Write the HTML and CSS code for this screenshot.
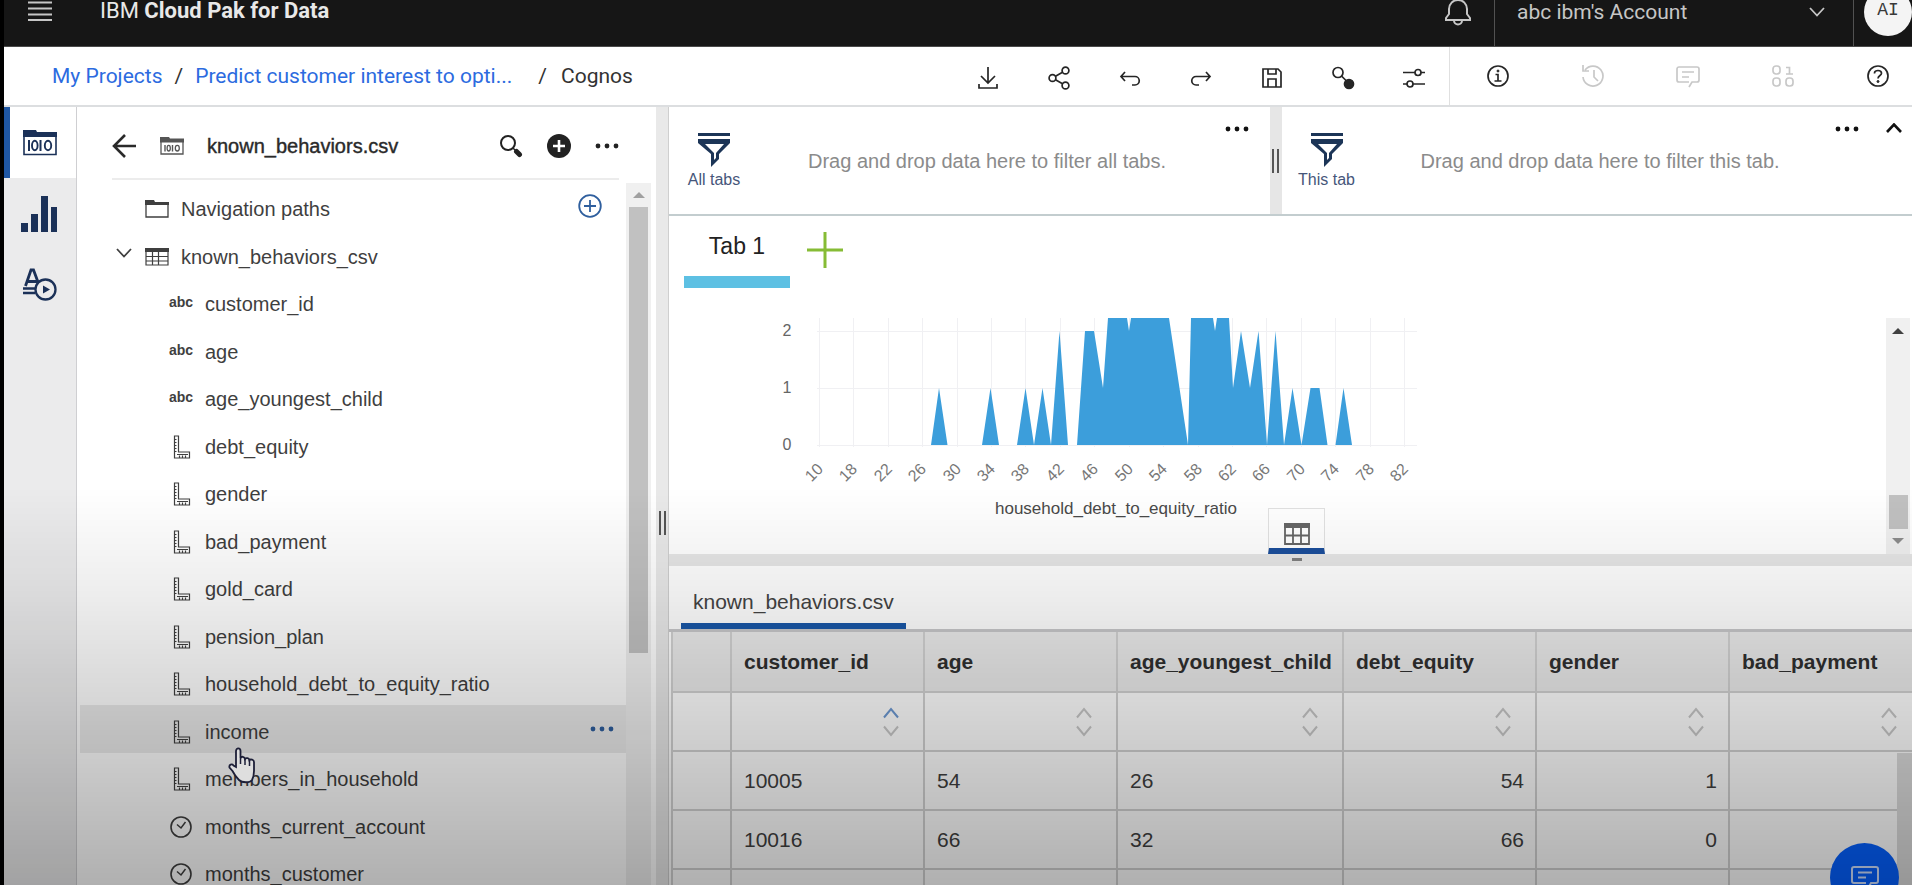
FILE: index.html
```html
<!DOCTYPE html>
<html lang="en">
<head>
<meta charset="utf-8">
<title>IBM Cloud Pak for Data - Cognos</title>
<link rel="stylesheet" href="styles.css">
</head>
<body>
<svg class="defs" aria-hidden="true">
  <symbol id="dots" viewBox="0 0 24 6"><circle cx="3" cy="3" r="2.400"/><circle cx="12" cy="3" r="2.400"/><circle cx="21" cy="3" r="2.400"/></symbol>
  <symbol id="ruler" viewBox="0 0 20 26"><path d="M3.500 2h4v16h11v6h-15zM4 5.500h1.500M4 8.500h1.500M4 11.500h1.500M4 14.500h1.500M4 17.500h1.500M8.500 24v-2.500M11.500 24v-2.500M14.500 24v-2.500M6 20.500h11" fill="none" stroke="currentColor" stroke-width="1.200"/></symbol>
  <symbol id="clock" viewBox="0 0 24 24"><circle cx="12" cy="12" r="10" fill="none" stroke="currentColor" stroke-width="1.600"/><path d="M8 9.500l4 3.500 4.500-6" fill="none" stroke="currentColor" stroke-width="1.500"/></symbol>
  <symbol id="funnel" viewBox="0 0 34 34"><path d="M1 0h32v3H1z"/><path fill-rule="evenodd" d="M1 6h32v4L22 21v5l-8 8V21L1 10zM8 11l9 9v7l2-2v-5l8-9z"/></symbol>
  <symbol id="sort" viewBox="0 0 18 30"><path class="sort-up" d="M2 10.500L9 2l7 8.500"/><path class="sort-down" d="M2 19.500L9 28 16 19.500"/></symbol>
  <symbol id="chat" viewBox="0 0 32 32"><path d="M18 28l4-7h5a2 2 0 0 0 2-2V7a2 2 0 0 0-2-2H5a2 2 0 0 0-2 2v12a2 2 0 0 0 2 2h12M9 10.500h14M9 15.500h8" fill="none" stroke="currentColor" stroke-width="2"/></symbol>
</svg>

<header class="topbar">
  <button class="plain menu-btn" aria-label="Menu"><svg width="24" height="20" viewBox="0 0 24 20"><path d="M0 1.500h24M0 7.500h24M0 13.500h24M0 19h24" stroke="currentColor" stroke-width="2"/></svg></button>
  <span class="brand">IBM <b>Cloud Pak for Data</b></span>
  <div class="top-right">
    <button class="plain bell" aria-label="Notifications"><svg width="28" height="28" viewBox="0 0 28 28" fill="none" stroke="currentColor" stroke-width="2"><path d="M2 22v-2l3-4v-5a9 9 0 0 1 18 0v5l3 4v2zM10 22.500a4 4 0 0 0 8 0"/></svg></button>
    <button class="plain account"><span>abc ibm's Account</span><svg width="16" height="10" viewBox="0 0 16 10"><path d="M1 1l7 7.500L15 1" fill="none" stroke="currentColor" stroke-width="1.800"/></svg></button>
    <button class="plain avatar-cell" aria-label="Profile"><span class="avatar">AI</span></button>
  </div>
</header>

<div class="crumbbar">
  <nav class="crumbs"><a href="#">My Projects</a><span class="sep">/</span><a href="#" class="crumb-long">Predict customer interest to opti...</a><span class="sep">/</span><span>Cognos</span></nav>
  <div class="tools">
    <button class="plain" aria-label="Download"><svg viewBox="0 0 24 24"><path d="M12 1v16M5 10l7 7 7-7M3 18v4h18v-4"/></svg></button>
    <button class="plain" aria-label="Share"><svg viewBox="0 0 24 24"><circle cx="5.500" cy="12" r="3.400"/><circle cx="18.500" cy="4.500" r="3.400"/><circle cx="18.500" cy="19.500" r="3.400"/><path d="M8.500 10.300l7-4M8.500 13.700l7 4"/></svg></button>
    <button class="plain" aria-label="Undo"><svg viewBox="0 0 24 24"><path d="M7 6L3 10.500 7 15M3 10.500h14a4 4 0 0 1 0 8.500h-3"/></svg></button>
    <button class="plain" aria-label="Redo"><svg viewBox="0 0 24 24"><path d="M17 6l4 4.500-4 4.500M21 10.500H7a4 4 0 0 0 0 8.500h3"/></svg></button>
    <button class="plain" aria-label="Save"><svg viewBox="0 0 24 24"><path d="M3 3h15l3 3v15H3zM8 3v5h8V3M8 21v-8h8v8"/></svg></button>
    <button class="plain" aria-label="Links"><svg viewBox="0 0 24 24"><circle cx="7" cy="6.500" r="5"/><path d="M10.500 10l5 5"/><circle cx="18" cy="18" r="4.500" fill="currentColor"/></svg></button>
    <button class="plain" aria-label="Settings"><svg viewBox="0 0 24 24"><circle cx="16" cy="6.500" r="3"/><circle cx="8" cy="18" r="3"/><path d="M1 6.500h12M19 6.500h4M1 18h4M11 18h12"/></svg></button>
  </div>
  <div class="tools-info">
    <button class="plain" aria-label="Information"><svg viewBox="0 0 24 24"><circle cx="12" cy="12" r="10"/><path d="M9.500 10.500H12V17M8.500 17h7"/><circle cx="12" cy="7" r="1" fill="currentColor" stroke-width="1"/></svg></button>
    <button class="plain" disabled aria-label="History"><svg viewBox="0 0 24 24"><path d="M4 6a10 10 0 1 1-2 7M2 1v6h6M13 6v7l4 4"/></svg></button>
    <button class="plain" disabled aria-label="Comments"><svg viewBox="0 0 24 24"><path d="M13 23l3-5h5a2 2 0 0 0 2-2V5a2 2 0 0 0-2-2H3a2 2 0 0 0-2 2v11a2 2 0 0 0 2 2h10M6 8h12M6 13h7"/></svg></button>
    <button class="plain" disabled aria-label="Data"><svg viewBox="0 0 24 24"><rect x="2" y="2" width="7" height="8" rx="3"/><rect x="2" y="14" width="7" height="8" rx="3"/><rect x="15" y="14" width="7" height="8" rx="3"/><path d="M15 3.500h3.500V10M15 10h7"/></svg></button>
    <button class="plain" aria-label="Help"><svg viewBox="0 0 24 24"><circle cx="12" cy="12" r="10"/><path d="M8.500 9.500V9c0-1.500 1.500-2.500 3.500-2.500s3.500 1 3.500 2.800c0 2.200-3.500 2.200-3.500 5.200"/><circle cx="12" cy="17.500" r="1" fill="currentColor" stroke-width="1"/></svg></button>
  </div>
</div>

<main class="workspace">
  <nav class="rail">
    <button class="plain rail-item active" aria-label="Sources"><svg width="34" height="26" viewBox="0 0 34 26"><path d="M0 0h13l1 2h20v5H0z" fill="currentColor"/><path d="M1 6v18.500h32V6" fill="none" stroke="currentColor" stroke-width="1.600"/><path d="M6 10v11M17.500 10v11" stroke="currentColor" stroke-width="2"/><g fill="none" stroke="currentColor" stroke-width="1.900"><ellipse cx="11.800" cy="15.500" rx="2.800" ry="4.700"/><ellipse cx="25" cy="15.500" rx="3.200" ry="4.700"/></g></svg></button>
    <button class="plain rail-item" aria-label="Visualizations"><svg width="37" height="38" viewBox="0 0 37 38" fill="currentColor"><rect x="0" y="28" width="7" height="9"/><rect x="10" y="19" width="7" height="18"/><rect x="20" y="1" width="7" height="36"/><rect x="30" y="12" width="6" height="25"/></svg></button>
    <button class="plain rail-item" aria-label="Widgets"><svg width="34" height="34" viewBox="0 0 34 34" fill="none" stroke="currentColor"><path d="M2.500 18L8 2h2.500L15 14M5 13.500h9" stroke-width="2.800"/><path d="M0 20.500h13M0 25h12" stroke-width="2.600"/><circle cx="22.500" cy="21.500" r="10" fill="#ebebec" stroke-width="2.300"/><path d="M20 17.500l7 4-7 4z" fill="currentColor" stroke="none"/></svg></button>
  </nav>

  <aside class="sources">
    <div class="sources-head">
      <button class="plain" aria-label="Back"><svg width="24" height="24" viewBox="0 0 24 24"><path d="M13 1L2 12l11 11M2 12h22" fill="none" stroke="currentColor" stroke-width="2.600"/></svg></button>
      <svg class="head-folder" width="24" height="18" viewBox="0 0 24 18"><path d="M0 0h9l1 1.500h14v4H0z" fill="currentColor"/><path d="M1 4v13h22V4" fill="none" stroke="currentColor" stroke-width="1.300"/><path d="M5 8v6.500M12.500 8v6.500" stroke="currentColor" stroke-width="1.400"/><g fill="none" stroke="currentColor" stroke-width="1.300"><ellipse cx="8.700" cy="11.200" rx="1.600" ry="2.800"/><ellipse cx="17.300" cy="11.200" rx="2" ry="2.800"/></g></svg>
      <h1 class="head-title">known_behaviors.csv</h1>
      <div class="head-actions">
        <button class="plain" aria-label="Search"><svg width="24" height="24" viewBox="0 0 24 24"><circle cx="9" cy="9" r="7" fill="none" stroke="currentColor" stroke-width="2"/><path d="M14 14l3 3" stroke="currentColor" stroke-width="1.500"/><path d="M17.500 17.500l3 3" stroke="currentColor" stroke-width="5" stroke-linecap="round"/></svg></button>
        <button class="plain" aria-label="Add"><svg width="24" height="24" viewBox="0 0 24 24"><circle cx="12" cy="12" r="12" fill="currentColor"/><path d="M12 6v12M6 12h12" stroke="#fff" stroke-width="2.600"/></svg></button>
        <button class="plain" aria-label="More"><svg width="24" height="6" fill="currentColor"><use href="#dots"/></svg></button>
      </div>
    </div>
    <div class="tree-wrap">
      <ul class="tree">
        <li class="lvl0"><svg class="ic" width="24" height="20" viewBox="0 0 24 20"><path d="M0 1h9l1 2h14v3H0z" fill="currentColor"/><path d="M1 5v13h22V5" fill="none" stroke="currentColor" stroke-width="1.300"/></svg><span>Navigation paths</span><button class="plain row-add" aria-label="Add path"><svg width="24" height="24" viewBox="0 0 24 24"><circle cx="12" cy="12" r="10.800" fill="none" stroke="currentColor" stroke-width="1.800"/><path d="M12 6v12M6 12h12" stroke="currentColor" stroke-width="1.800"/></svg></button></li>
        <li class="lvl0"><button class="plain toggle" aria-label="Collapse"><svg width="16" height="10" viewBox="0 0 16 10"><path d="M1 1l7 7.500L15 1" fill="none" stroke="currentColor" stroke-width="1.800"/></svg></button><svg class="ic" width="24" height="20" viewBox="0 0 24 20"><path d="M0 1h24v4H0z" fill="currentColor"/><path d="M1 4v14h22V4M1 9.500h22M1 14h22M7.500 5v13M13.500 5v13" fill="none" stroke="currentColor" stroke-width="1.200"/></svg><span>known_behaviors_csv</span></li>
        <li><span class="abc">abc</span><span>customer_id</span></li>
        <li><span class="abc">abc</span><span>age</span></li>
        <li><span class="abc">abc</span><span>age_youngest_child</span></li>
        <li><svg class="ic" width="24" height="26"><use href="#ruler"/></svg><span>debt_equity</span></li>
        <li><svg class="ic" width="24" height="26"><use href="#ruler"/></svg><span>gender</span></li>
        <li><svg class="ic" width="24" height="26"><use href="#ruler"/></svg><span>bad_payment</span></li>
        <li><svg class="ic" width="24" height="26"><use href="#ruler"/></svg><span>gold_card</span></li>
        <li><svg class="ic" width="24" height="26"><use href="#ruler"/></svg><span>pension_plan</span></li>
        <li><svg class="ic" width="24" height="26"><use href="#ruler"/></svg><span>household_debt_to_equity_ratio</span></li>
        <li class="hover"><svg class="ic" width="24" height="26"><use href="#ruler"/></svg><span>income</span><button class="plain row-more" aria-label="More"><svg width="24" height="6" fill="currentColor"><use href="#dots"/></svg></button>
          <svg class="cursor" width="28" height="38" viewBox="0 0 28 38"><path d="M8 20V4c0-3.500 4.500-3.500 4.500 0v7c1-2 4-1.500 4.500 1 1-1.500 4-1 4.300 1 1.200-1 4.700-.500 4.700 2v9c0 5-1 7-2 9-2 3-10 3-13 0-3-3-5-6-6.500-9L1.500 20.500c-.800-3 2.500-4 4-2z" fill="#dedede" stroke="#1d1f38" stroke-width="1.800"/><path d="M12.500 11v6M17 12v6M21.500 13v6" stroke="#1d1f38" stroke-width="1.500"/></svg></li>
        <li><svg class="ic" width="24" height="26"><use href="#ruler"/></svg><span>members_in_household</span></li>
        <li><svg class="ic" width="24" height="24"><use href="#clock"/></svg><span>months_current_account</span></li>
        <li><svg class="ic" width="24" height="24"><use href="#clock"/></svg><span>months_customer</span></li>
      </ul>
      <div class="track"><i class="arrow-up"></i><i class="thumb"></i></div>
    </div>
  </aside>

  <div class="splitter"><i class="grip"></i></div>

  <section class="board">
    <div class="filters">
      <div class="filter"><div class="filter-scope"><svg width="34" height="34" fill="currentColor"><use href="#funnel"/></svg><span>All tabs</span></div><p>Drag and drop data here to filter all tabs.</p><button class="plain filter-more" aria-label="More"><svg width="24" height="6" fill="currentColor"><use href="#dots"/></svg></button></div>
      <div class="filter-split"><i class="grip"></i></div>
      <div class="filter"><div class="filter-scope"><svg width="34" height="34" fill="currentColor"><use href="#funnel"/></svg><span>This tab</span></div><p>Drag and drop data here to filter this tab.</p><button class="plain filter-more" aria-label="More"><svg width="24" height="6" fill="currentColor"><use href="#dots"/></svg></button><button class="plain filter-fold" aria-label="Collapse"><svg width="16" height="10" viewBox="0 0 16 10"><path d="M1 9l7-7.500L15 9" fill="none" stroke="currentColor" stroke-width="2.600"/></svg></button></div>
    </div>

    <div class="tabs">
      <button class="plain tab">Tab 1</button>
      <button class="plain add-tab" aria-label="Add tab"><svg width="36" height="36" viewBox="0 0 36 36"><path d="M18 0v36M0 18h36" stroke="currentColor" stroke-width="3"/></svg></button>
    </div>

    <div class="canvas">
      <svg class="chart" width="660" height="210" viewBox="770 317 660 210" role="img" aria-label="household_debt_to_equity_ratio">
        <path class="gridlines" d="M817 330.500h600M817 387.500h600M817 444.500h600M819.500 317v129M853.500 317v129M888.500 317v129M922.500 317v129M957.500 317v129M991.500 317v129M1025.500 317v129M1060.500 317v129M1094.500 317v129M1129.500 317v129M1163.500 317v129M1198.500 317v129M1232.500 317v129M1266.500 317v129M1301.500 317v129M1335.500 317v129M1370.500 317v129M1404.500 317v129"/>
        <path class="area" d="M931 444l8-57 8.500 57zM982 444l8.500-57 8.500 57zM1017 444l8.500-57 8.500 57 8.500-57 8.500 57 8.500-114 8.500 114zM1077 444l8-114h9l9 57 5-70h19l2 13 2-13h38l19 127 3-127h22l2 13 2-13h12l4 70 8-57 9 57 8.500-57 8.500 114 8.500-114 8.500 114 8.500-57 9 57 9-57h9l8 57zM1335.500 444l8-57 8.500 57z"/>
        <g class="ylab"><text x="787" y="335">2</text><text x="787" y="392">1</text><text x="787" y="449">0</text></g>
        <g class="xlab">
          <text transform="translate(824 469) rotate(-45)">10</text><text transform="translate(858 469) rotate(-45)">18</text><text transform="translate(893 469) rotate(-45)">22</text><text transform="translate(927 469) rotate(-45)">26</text><text transform="translate(962 469) rotate(-45)">30</text><text transform="translate(996 469) rotate(-45)">34</text><text transform="translate(1030 469) rotate(-45)">38</text><text transform="translate(1065 469) rotate(-45)">42</text><text transform="translate(1099 469) rotate(-45)">46</text><text transform="translate(1134 469) rotate(-45)">50</text><text transform="translate(1168 469) rotate(-45)">54</text><text transform="translate(1203 469) rotate(-45)">58</text><text transform="translate(1237 469) rotate(-45)">62</text><text transform="translate(1271 469) rotate(-45)">66</text><text transform="translate(1306 469) rotate(-45)">70</text><text transform="translate(1340 469) rotate(-45)">74</text><text transform="translate(1375 469) rotate(-45)">78</text><text transform="translate(1409 469) rotate(-45)">82</text>
        </g>
        <text class="axis-title" x="1116" y="513">household_debt_to_equity_ratio</text>
      </svg>
      <button class="plain grid-toggle" aria-label="Data table"><svg width="26" height="22" viewBox="0 0 26 22"><path d="M0 0h26v5H0z" fill="currentColor"/><path d="M1 4v17h24V4M1 12.500h24M9 5v16M17 5v16" fill="none" stroke="currentColor" stroke-width="1.800"/></svg></button>
      <div class="track canvas-track"><i class="arrow-up dark"></i><i class="thumb"></i><i class="arrow-down"></i></div>
    </div>

    <div class="h-split"><i></i></div>

    <div class="data">
      <div class="data-tabs"><button class="plain data-tab">known_behaviors.csv</button></div>
      <div class="data-scroll">
        <table>
          <colgroup><col class="c-index"><col class="c-std"><col class="c-std"><col class="c-wide"><col class="c-std"><col class="c-std"><col class="c-std"></colgroup>
          <thead>
            <tr><th></th><th scope="col">customer_id</th><th scope="col">age</th><th scope="col">age_youngest_child</th><th scope="col">debt_equity</th><th scope="col">gender</th><th scope="col">bad_payment</th></tr>
            <tr class="sort-row"><td></td>
              <td><button class="plain sort asc" aria-label="Sort customer_id"><svg width="18" height="30"><use href="#sort"/></svg></button></td>
              <td><button class="plain sort" aria-label="Sort age"><svg width="18" height="30"><use href="#sort"/></svg></button></td>
              <td><button class="plain sort" aria-label="Sort age_youngest_child"><svg width="18" height="30"><use href="#sort"/></svg></button></td>
              <td><button class="plain sort" aria-label="Sort debt_equity"><svg width="18" height="30"><use href="#sort"/></svg></button></td>
              <td><button class="plain sort" aria-label="Sort gender"><svg width="18" height="30"><use href="#sort"/></svg></button></td>
              <td><button class="plain sort" aria-label="Sort bad_payment"><svg width="18" height="30"><use href="#sort"/></svg></button></td></tr>
          </thead>
          <tbody>
            <tr><td></td><td>10005</td><td>54</td><td>26</td><td class="num">54</td><td class="num">1</td><td></td></tr>
            <tr><td></td><td>10016</td><td>66</td><td>32</td><td class="num">66</td><td class="num">0</td><td></td></tr>
            <tr><td></td><td></td><td></td><td></td><td></td><td></td><td></td></tr>
          </tbody>
        </table>
        <div class="table-track"></div>
      </div>
    </div>
  </section>
</main>
<button class="plain chat" aria-label="Chat"><svg width="32" height="32"><use href="#chat"/></svg></button>
</body>
</html>
```
FILE: styles.css
```css
* { box-sizing: border-box; }
body {
  margin: 0;
  height: 100vh;
  overflow: hidden;
  display: flex;
  flex-direction: column;
  border-left: 4px solid #000;
  background: #fff;
  color: #333;
  font: 20px/24px "Liberation Sans", Arial, sans-serif;
}
/* shade that deepens toward the bottom of the window */
body::after {
  content: "";
  position: fixed;
  inset: 55vh 0 0 4px;
  background: linear-gradient(rgba(0,0,0,0), rgba(0,0,0,.07) 27%, rgba(0,0,0,.31));
  pointer-events: none;
}
.defs { position: absolute; width: 0; height: 0; }
.plain { margin: 0; padding: 0; border: 0; background: none; color: inherit; font: inherit; cursor: pointer; }
svg { display: block; flex: none; }

.topbar { flex: none; display: flex; align-items: center; height: 47px; padding: 0 0 24px 24px; background: #161616; color: #e8e8e8; border-bottom: 1px solid #4a4a4a; font-family: Roboto, sans-serif; }
.menu-btn { color: #c6c6c6; }
.brand { margin-left: 48px; font-size: 22px; line-height: 20px; }
.top-right { margin-left: auto; display: flex; }
.top-right > * { height: 46px; margin-bottom: -24px; padding-bottom: 22px; }
.bell { width: 72px; display: flex; justify-content: center; align-items: center; color: #c6c6c6; }
.account { width: 360px; display: flex; align-items: center; justify-content: space-between; padding: 0 28px 22px 22px; border: solid #525252; border-width: 0 1px; color: #c6c6c6; }
.account span { font-size: 21px; }
.avatar-cell { width: 58px; display: flex; justify-content: center; align-items: center; padding-left: 10px; }
.avatar { flex: none; width: 48px; height: 48px; border-radius: 50%; background: #f4f4f4; color: #393939; font: 18px/44px "Liberation Mono", monospace; }

.crumbbar { flex: none; display: flex; height: 60px; border-bottom: 2px solid #dcdee0; }
.crumbs { display: flex; align-items: center; padding-left: 48px; font-family: Roboto, sans-serif; font-size: 21px; white-space: nowrap; }
.crumbs a { color: #2c6be0; text-decoration: none; }
.crumbs .sep { padding: 0 12px; }
.crumbs .crumb-long + .sep { padding: 0 14px 0 26px; }
.tools, .tools-info { display: flex; align-items: center; }
.tools { margin-left: auto; padding-top: 4px; }
.tools button, .tools-info button { display: flex; justify-content: center; color: #262626; }
.tools button { width: 71px; }
.tools svg, .tools-info svg { width: 24px; height: 24px; fill: none; stroke: currentColor; stroke-width: 1.7; }
.tools-info { border-left: 1px solid #e0e0e0; width: 463px; }
.tools-info button { width: 95px; flex: none; }
.tools-info button:disabled { color: #c8c8c8; }

.workspace { flex: 1; min-height: 0; display: grid; grid-template-columns: 73px 579px 13px minmax(0, 1fr); }
.rail { background: #ebebec; border-right: 1px solid #cfcfd2; color: #1b3158; }
.rail-item { display: flex; align-items: center; justify-content: center; width: 100%; height: 71px; padding-right: 1px; }
.rail-item.active { background: #fff; border-left: 6px solid #1f57a4; padding-right: 7px; }

.sources { min-height: 0; display: flex; flex-direction: column; color: #3f3f3f; }
.sources-head { flex: none; display: flex; align-items: center; height: 73px; margin: 0 37px 0 35px; padding-top: 6px; border-bottom: 2px solid #ececec; color: #2a2a2a; }
.head-folder { margin: 0 23px 0 24px; color: #555; }
.head-title { margin: 0; font-size: 20px; line-height: 24px; font-weight: 400; -webkit-text-stroke: 0.4px; }
.head-actions { margin-left: auto; display: flex; align-items: center; gap: 24px; }
.head-actions svg { color: #222; }
.tree-wrap { flex: 1; min-height: 0; display: flex; overflow: hidden; padding-top: 3px; }
.tree { flex: 1; list-style: none; margin: 0; padding: 0 0 0 3px; min-width: 0; }
.tree li { position: relative; display: flex; align-items: center; height: 47px; padding: 5px 12px 0 89px; }
.tree li:nth-child(even) { height: 48px; }
.tree li.lvl0 { padding-left: 65px; }
.tree li .ic { margin-right: 12px; }
.toggle { position: absolute; left: 36px; top: 18px; }
.abc { width: 24px; margin-right: 12px; font-size: 14px; line-height: 18px; font-weight: 700; padding-bottom: 4px; }
.row-add, .row-more { margin-left: auto; color: #2f5f9e; padding-bottom: 6px; }
.row-add { margin-right: 12px; }
.tree li.hover { background: #ebebeb; }
.cursor { position: absolute; left: 148px; top: 42px; z-index: 1; }
.track { flex: none; width: 25px; margin-right: 5px; background: #f0f0f0; display: flex; flex-direction: column; align-items: center; padding-top: 9px; gap: 9px; }
.thumb { width: 19px; height: 446px; background: #c1c1c1; }
.arrow-up, .arrow-down { border: 6px solid transparent; }
.arrow-up { border-top-width: 0; border-bottom-color: #a0a0a0; }
.arrow-up.dark { border-bottom-color: #404040; }
.arrow-down { border-bottom-width: 0; border-top-color: #8c8c8c; }

.splitter { display: flex; background: #e9e9e9; border-right: 1px solid #cfcfcf; padding: 404px 0 0 3px; }
.grip { display: block; width: 7px; height: 24px; border: solid #555; border-width: 0 2px; }

.board { min-width: 0; min-height: 0; display: flex; flex-direction: column; }
.filters { flex: none; display: flex; height: 109px; border-bottom: 2px solid #c3cdcf; }
.filter { flex: 1 1 600px; position: relative; display: flex; align-items: center; }
.filters .filter:last-child { flex-basis: 630px; }
.filter-scope { width: 90px; display: flex; flex-direction: column; align-items: center; gap: 3px; color: #1c3557; font-size: 16px; padding-top: 2px; }
.filter-scope span { color: #46567a; line-height: 20px; }
.filter p { margin: 0 0 0 49px; color: #8b8b8b; }
.filter-more { position: absolute; right: 21px; top: 19px; color: #111; }
.filters .filter:last-child .filter-more { right: 53px; }
.filter-fold { position: absolute; right: 10px; top: 16px; color: #111; }
.filter-split { width: 12px; background: #e6e6e6; display: flex; justify-content: center; align-items: center; }

.tabs { flex: none; display: flex; align-items: flex-start; padding-left: 15px; height: 102px; }
.tab { width: 106px; height: 72px; border-bottom: 12px solid #5dc0e3; font-size: 23px; color: #222; }
.add-tab { margin: 16px 0 0 17px; color: #86bc35; }

.canvas { flex: none; height: 236px; position: relative; display: flex; justify-content: space-between; }
.chart { margin-left: 101px; font-family: "Liberation Sans", Arial, sans-serif; }
.gridlines { stroke: #f0f0f3; stroke-width: 1; fill: none; }
.area { fill: #3c9edb; }
.ylab { font-size: 16px; fill: #666; text-anchor: middle; }
.xlab { font-size: 16px; fill: #777; text-anchor: end; }
.axis-title { font-size: 17px; fill: #4a4a4a; text-anchor: middle; }
.grid-toggle { position: absolute; left: 599px; bottom: 0; width: 57px; height: 46px; padding-top: 14px; display: flex; justify-content: center; align-items: flex-start; color: #666; background: #fff; border: 1px solid #e2e2e2; border-bottom: 6px solid #1c4f9c; }
.canvas-track { width: 24px; margin-right: 2px; padding: 10px 0; }
.canvas-track .thumb { margin-top: auto; height: 34px; }
.h-split { flex: none; height: 12px; background: #e6e6e6; padding: 4px 0 0 623px; }
.h-split i { display: block; width: 10px; height: 3px; background: #808080; }

.data { flex: 1; min-height: 0; display: flex; flex-direction: column; }
.data-tabs { flex: none; padding-left: 12px; height: 66px; border-bottom: 3px solid #c8c8ca; display: flex; }
.data-tab { padding: 14px 12px 0; border-bottom: 6px solid #1a58a8; font-size: 21px; color: #444; }
.data-scroll { flex: 1; min-height: 0; overflow: hidden; position: relative; padding-left: 2px; }
table { width: 100%; min-width: 1241px; table-layout: fixed; border-collapse: collapse; font-size: 21px; color: #404040; }
.c-index { width: 59px; }
.c-std { width: 193px; }
.c-wide { width: 226px; }
th, td { height: 59px; padding: 0 12px; border: 2px solid #d2d2d2; text-align: left; font-weight: 400; white-space: nowrap; }
th { height: 60px; border-top: 0; background: #ebebeb; font-weight: 700; color: #303030; }
td.num { text-align: right; padding-right: 11px; }
.sort { display: block; margin-left: auto; margin-right: 11px; }
.sort svg { fill: none; stroke: #c8c8c8; stroke-width: 2; --up: #c8c8c8; }
.sort-up { stroke: var(--up); }
.sort.asc svg { --up: #6d99d2; }
.table-track { position: absolute; right: 0; top: 121px; bottom: 0; width: 15px; background: #dcdcdc; }

.chat { position: fixed; right: 13px; bottom: -27px; width: 69px; height: 69px; border-radius: 50%; background: #0560ff; color: #cfe0ff; display: flex; align-items: center; justify-content: center; }
```
